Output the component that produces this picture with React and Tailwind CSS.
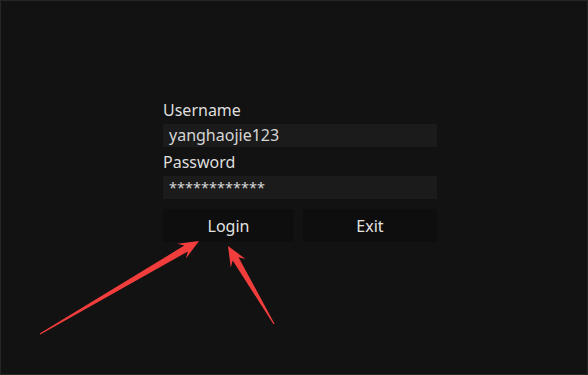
import React from 'react';

function arrowPoints(tx, ty, hx, hy) {
  const dx = hx - tx;
  const dy = hy - ty;
  const len = Math.hypot(dx, dy);
  const ux = dx / len;
  const uy = dy / len;
  const nx = -uy;
  const ny = ux;
  const headLen = 20;
  const headW = 8.5;
  const neckW = 3.4;
  const tailW = 0.6;
  const bx = hx - ux * headLen;
  const by = hy - uy * headLen;
  const nbx = hx - ux * (headLen - 5);
  const nby = hy - uy * (headLen - 5);
  const pts = [
    [tx + nx * tailW, ty + ny * tailW],
    [nbx + nx * neckW, nby + ny * neckW],
    [bx + nx * headW, by + ny * headW],
    [hx, hy],
    [bx - nx * headW, by - ny * headW],
    [nbx - nx * neckW, nby - ny * neckW],
    [tx - nx * tailW, ty - ny * tailW],
  ];
  return pts.map((p) => p.map((v) => v.toFixed(1)).join(',')).join(' ');
}

function Field({ label, value, masked }) {
  return (
    <div className="flex flex-col">
      <div className="h-[22px] leading-[22px] text-[16px] text-[#dedede]">{label}</div>
      <div
        className={`mt-[3px] h-[23px] bg-[#1b1b1b] px-[6px] leading-[23px] text-[#d6d6d6] ${
          masked ? 'text-[14.5px]' : 'text-[16px]'
        }`}
      >
        {value}
      </div>
    </div>
  );
}

export default function App() {
  return (
    <div
      className="relative h-[375px] w-[588px] overflow-hidden border border-[#262626] bg-[#121212]"
      style={{ fontFamily: '"Noto Sans", "Open Sans", sans-serif' }}
    >
      <div className="ml-[162px] mt-[98px] flex w-[274px] flex-col gap-[4px]">
        <Field label="Username" value="yanghaojie123" />
        <Field label="Password" value="************" masked />
        <div className="mt-[6px] flex gap-[9px]">
          <button className="h-[33px] w-[131px] bg-[#0e0e0e] text-[16px] text-[#e2e2e2]">Login</button>
          <button className="h-[33px] flex-1 bg-[#0e0e0e] text-[16px] text-[#e2e2e2]">Exit</button>
        </div>
      </div>

      <svg className="pointer-events-none absolute left-0 top-0" width="588" height="375">
        <polygon points={arrowPoints(39, 333, 198, 240)} fill="#f23d3d" />
        <polygon points={arrowPoints(273, 323, 227, 245)} fill="#f23d3d" />
      </svg>
    </div>
  );
}
